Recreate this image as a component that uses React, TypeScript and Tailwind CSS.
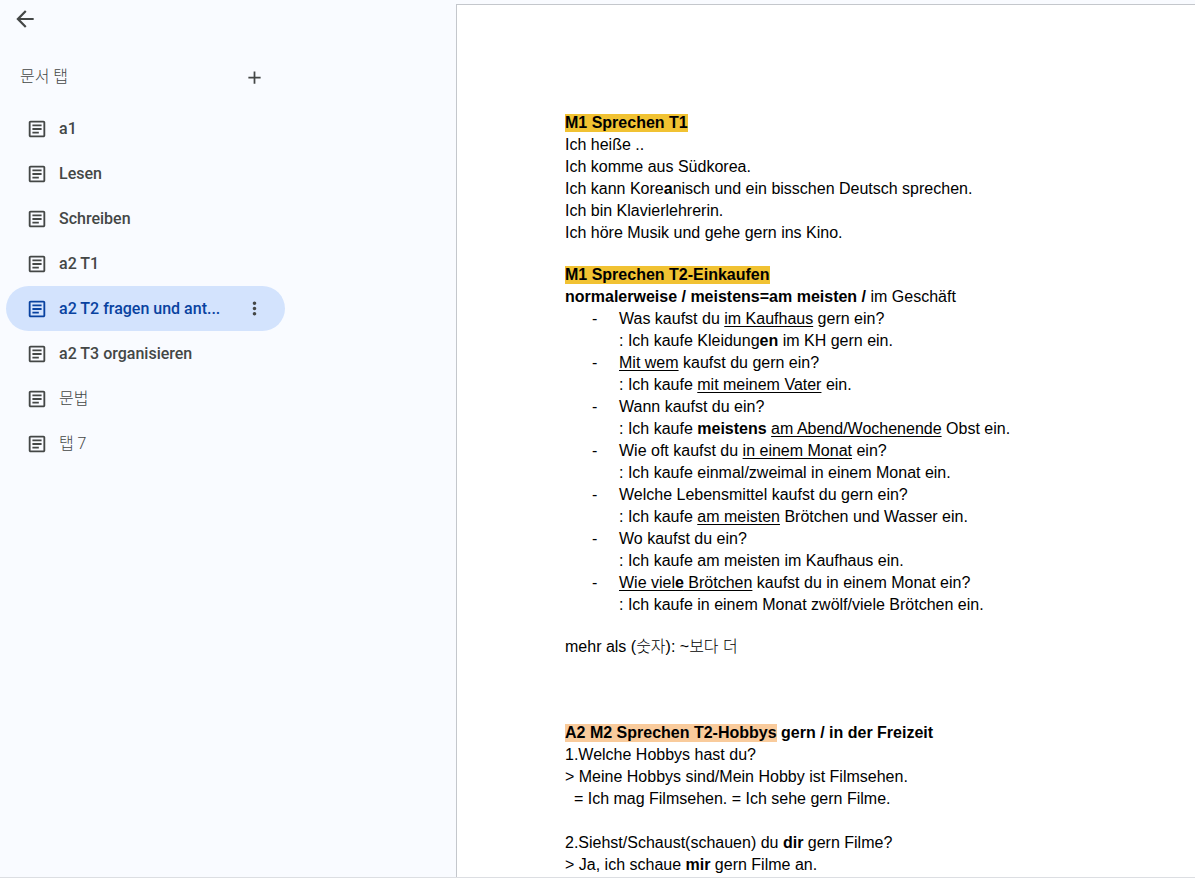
import type { ReactNode } from 'react';
import { MdAdd, MdArrowBack, MdMoreVert, MdOutlineArticle } from 'react-icons/md';

interface DocTab {
  id: string;
  label: string;
  light?: boolean;
}

interface Exchange {
  question: ReactNode;
  answer: ReactNode;
}

const TABS: DocTab[] = [
  { id: 'a1', label: 'a1' },
  { id: 'lesen', label: 'Lesen' },
  { id: 'schreiben', label: 'Schreiben' },
  { id: 'a2-t1', label: 'a2 T1' },
  { id: 'a2-t2', label: 'a2 T2 fragen und ant...' },
  { id: 'a2-t3', label: 'a2 T3 organisieren' },
  { id: 'grammar', label: '문법', light: true },
  { id: 'tab-7', label: '탭 7', light: true },
];

const ACTIVE_TAB = 'a2-t2';

const SHOPPING: Exchange[] = [
  {
    question: <>Was kaufst du <U>im Kaufhaus</U> gern ein?</>,
    answer: <>: Ich kaufe Kleidung<b>en</b> im KH gern ein.</>,
  },
  {
    question: <><U>Mit wem</U> kaufst du gern ein?</>,
    answer: <>: Ich kaufe <U>mit meinem Vater</U> ein.</>,
  },
  {
    question: <>Wann kaufst du ein?</>,
    answer: <>: Ich kaufe <b>meistens</b> <U>am Abend/Wochenende</U> Obst ein.</>,
  },
  {
    question: <>Wie oft kaufst du <U>in einem Monat</U> ein?</>,
    answer: <>: Ich kaufe einmal/zweimal in einem Monat ein.</>,
  },
  {
    question: <>Welche Lebensmittel kaufst du gern ein?</>,
    answer: <>: Ich kaufe <U>am meisten</U> Brötchen und Wasser ein.</>,
  },
  {
    question: <>Wo kaufst du ein?</>,
    answer: <>: Ich kaufe am meisten im Kaufhaus ein.</>,
  },
  {
    question: <><U>Wie viel<b>e</b> Brötchen</U> kaufst du in einem Monat ein?</>,
    answer: <>: Ich kaufe in einem Monat zwölf/viele Brötchen ein.</>,
  },
];

function U({ children }: { children: ReactNode }) {
  return (
    <u className="decoration-1 underline-offset-2 [text-decoration-skip-ink:none]">{children}</u>
  );
}

function TabItem({ tab, active }: { tab: DocTab; active: boolean }) {
  return (
    <li
      className={`flex h-[45px] items-center rounded-full px-5 ${
        active ? 'bg-[#d3e3fd] text-[#0842a0]' : 'text-[#444746]'
      }`}
    >
      <button
        type="button"
        aria-current={active ? 'page' : undefined}
        className={`flex min-w-0 flex-1 items-center gap-[11px] text-left ${
          tab.light ? 'font-light' : 'font-medium'
        }`}
      >
        <MdOutlineArticle className="size-[22px] shrink-0" aria-hidden="true" />
        <span className="truncate">{tab.label}</span>
      </button>
      {active && (
        <button type="button" aria-label="탭 옵션" className="text-[#444746]">
          <MdMoreVert className="size-[21px]" aria-hidden="true" />
        </button>
      )}
    </li>
  );
}

function Sidebar() {
  return (
    <aside className="w-[456px] shrink-0 font-['Roboto','Noto_Sans_CJK_KR',sans-serif] text-base text-[#444746]">
      <div className="w-[285px] pl-[6px]">
        <div className="flex h-[38px] items-center pl-[6px]">
          <button type="button" aria-label="뒤로">
            <MdArrowBack className="size-[26px]" aria-hidden="true" />
          </button>
        </div>
        <div className="mt-4 flex h-[46px] items-center justify-between pr-5 pl-[14px]">
          <h2 className="font-light">문서 탭</h2>
          <button type="button" aria-label="탭 추가">
            <MdAdd className="size-[21px]" aria-hidden="true" />
          </button>
        </div>
        <nav aria-label="문서 탭" className="mt-[6px]">
          <ul>
            {TABS.map((tab) => (
              <TabItem key={tab.id} tab={tab} active={tab.id === ACTIVE_TAB} />
            ))}
          </ul>
        </nav>
      </div>
    </aside>
  );
}

export default function App() {
  return (
    <div className="flex h-screen overflow-hidden border-b border-[#dcdee2] bg-[#f9fbff]">
      <Sidebar />

      <main className="mt-1 min-w-0 flex-1 overflow-hidden border-t border-l border-[#c4c7cc] bg-white pt-[107px] pl-[108px] font-['Liberation_Sans','Noto_Sans_CJK_KR',sans-serif] text-base leading-[22px] whitespace-nowrap text-black">
        <section>
          <h1 className="font-bold">
            <mark className="bg-[#f1c232] pb-px">M1 Sprechen T1</mark>
          </h1>
          <p>Ich heiße ..</p>
          <p>Ich komme aus Südkorea.</p>
          <p>Ich kann Kore<b>a</b>nisch und ein bisschen Deutsch sprechen.</p>
          <p>Ich bin Klavierlehrerin.</p>
          <p>Ich höre Musik und gehe gern ins Kino.</p>
        </section>

        <section className="mt-5">
          <h2 className="font-bold">
            <mark className="bg-[#f1c232] pb-px">M1 Sprechen T2-Einkaufen</mark>
          </h2>
          <p><b>normalerweise / meistens=am meisten /</b> im Geschäft</p>
          <ul>
            {SHOPPING.map((item, i) => (
              <li key={i} className="flex pl-[27px]">
                <span className="w-[27px] shrink-0">-</span>
                <div>
                  <p>{item.question}</p>
                  <p>{item.answer}</p>
                </div>
              </li>
            ))}
          </ul>
        </section>

        <p className="mt-5 font-light">mehr als (숫자): ~보다 더</p>

        <section className="mt-16">
          <h2 className="font-bold">
            <mark className="bg-[#f9cb9c] pb-px">A2 M2 Sprechen T2-Hobbys</mark> gern / in der Freizeit
          </h2>
          <p>1.Welche Hobbys hast du?</p>
          <p>&gt; Meine Hobbys sind/Mein Hobby ist Filmsehen.</p>
          <p className="whitespace-pre">{'  = Ich mag Filmsehen. = Ich sehe gern Filme.'}</p>
          <p className="mt-[22px]">2.Siehst/Schaust(schauen) du <b>dir</b> gern Filme?</p>
          <p>&gt; Ja, ich schaue <b>mir</b> gern Filme an.</p>
        </section>
      </main>
    </div>
  );
}
